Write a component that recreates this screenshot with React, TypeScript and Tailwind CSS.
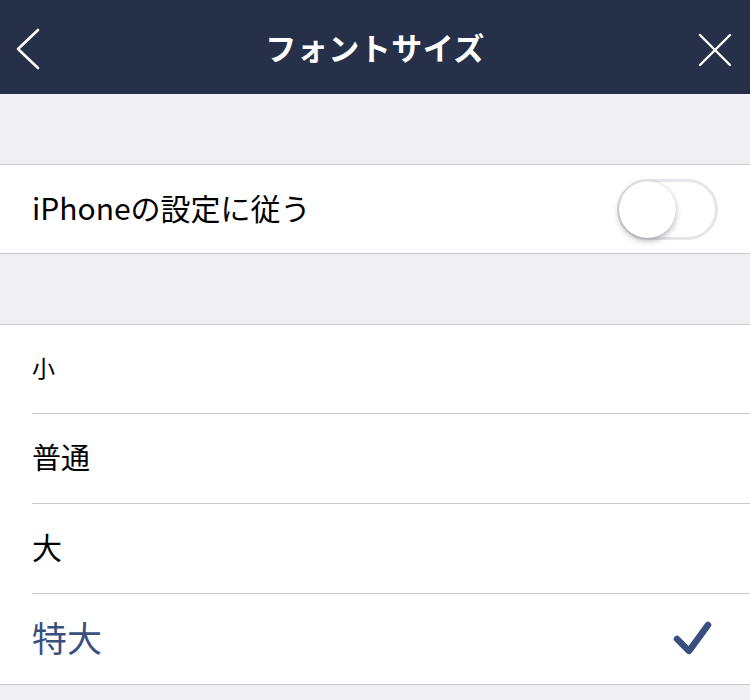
import React from "react";

const font = { fontFamily: '"Noto Sans CJK JP", "Noto Sans", sans-serif' };

export default function App() {
  return (
    <div className="w-[750px] h-[700px] bg-[#efeff4] overflow-hidden" style={font}>
      <header className="relative h-[94px] bg-[#263049] flex items-center justify-center">
        <svg className="absolute left-0 top-0" width="60" height="94" viewBox="0 0 60 94">
          <polyline points="38,30 18,49 38,68" fill="none" stroke="#fff" strokeWidth="2.6" strokeLinecap="round" strokeLinejoin="round" />
        </svg>
        <h1 className="text-white text-[31px] font-bold leading-none tracking-[0.5px] mb-[2px]">フォントサイズ</h1>
        <svg className="absolute right-0 top-0" width="60" height="94" viewBox="0 0 60 94">
          <line x1="10" y1="35" x2="40" y2="65" stroke="#fff" strokeWidth="2.4" strokeLinecap="round" />
          <line x1="40" y1="35" x2="10" y2="65" stroke="#fff" strokeWidth="2.4" strokeLinecap="round" />
        </svg>
      </header>

      <div className="h-[70px]" />

      <div className="bg-white border-y border-[#c8c7cc] h-[90px] flex items-center justify-between pl-[32px] pr-[32px]">
        <span className="text-[30px] text-black leading-none mb-[5px]">iPhoneの設定に従う</span>
        <div className="relative w-[101px] h-[61px] rounded-full border-[3px] border-[#e5e5ea] bg-white">
          <div className="absolute left-[-1px] top-[-1px] w-[57px] h-[57px] rounded-full bg-white shadow-[0_3px_6px_rgba(0,0,0,0.28),0_0_1px_rgba(0,0,0,0.2)]" />
        </div>
      </div>

      <div className="h-[70px]" />

      <div className="bg-white border-y border-[#c8c7cc]">
        <div className="pl-[32px]">
          <div className="h-[89px] flex items-center border-b border-[#c8c7cc]">
            <span className="text-[23px] text-black leading-none mb-[4px]">小</span>
          </div>
          <div className="h-[90px] flex items-center border-b border-[#c8c7cc]">
            <span className="text-[29px] text-black leading-none mb-[5px]">普通</span>
          </div>
          <div className="h-[90px] flex items-center border-b border-[#c8c7cc]">
            <span className="text-[30px] text-black leading-none mb-[5px]">大</span>
          </div>
          <div className="h-[90px] flex items-center justify-between pr-[36px]">
            <span className="text-[35px] text-[#3a5080] leading-none mb-[5px]">特大</span>
            <svg width="44" height="40" viewBox="0 0 44 40" className="mb-[4px]">
              <polyline points="7,22 19,34 38,8" fill="none" stroke="#38507f" strokeWidth="6.5" strokeLinecap="round" strokeLinejoin="round" />
            </svg>
          </div>
        </div>
      </div>
    </div>
  );
}
